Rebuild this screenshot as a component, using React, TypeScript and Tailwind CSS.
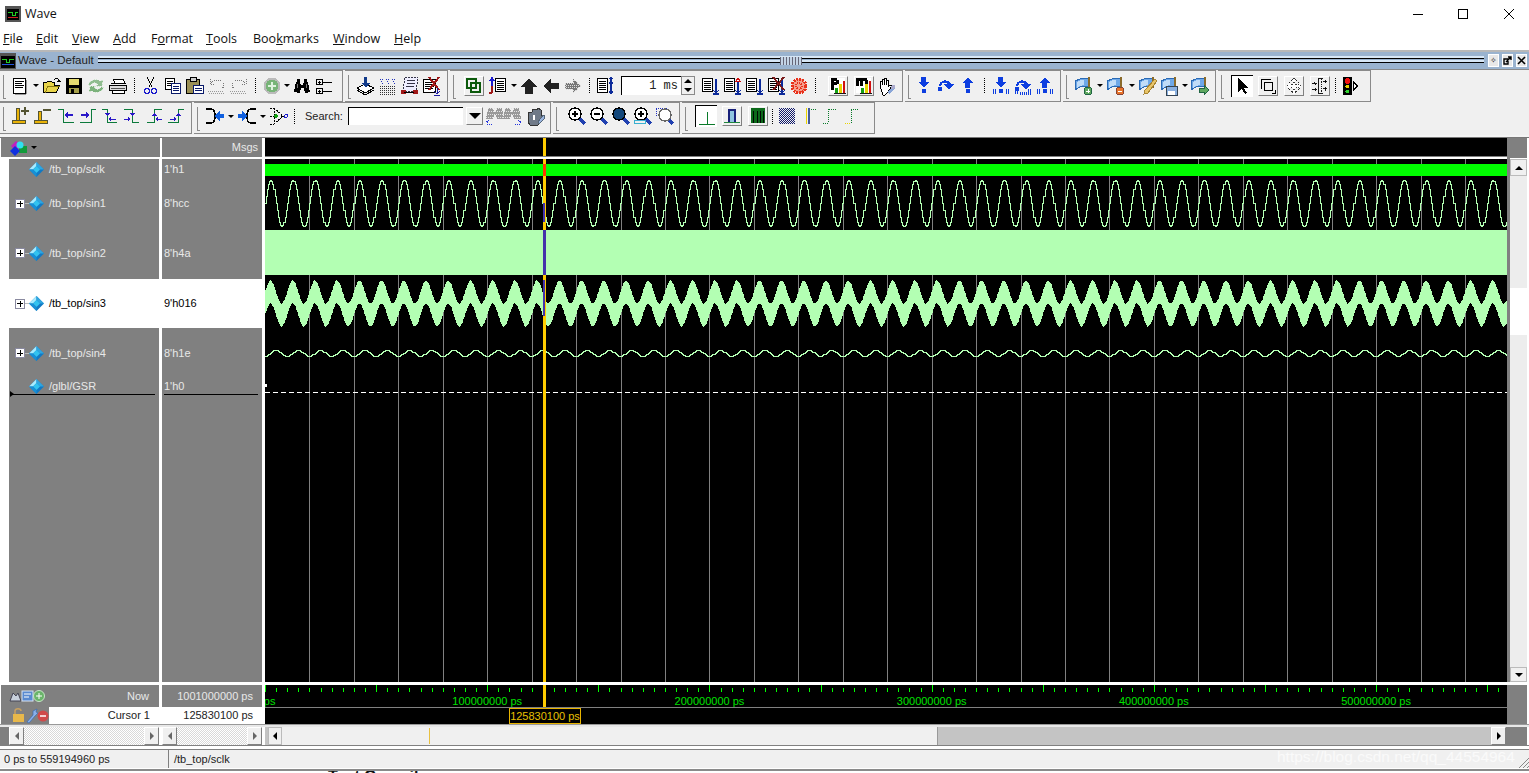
import type { ReactNode } from 'react';

const sans = 'font-["Liberation_Sans",sans-serif]';

const Ic = ({ children }: { children: ReactNode }) => (
  <svg width="20" height="20" viewBox="0 0 20 20" fill="none" shapeRendering="crispEdges">
    {children}
  </svg>
);

// toolbar helpers
const Cell = ({ children, raised }: { children?: ReactNode; raised?: boolean }) => (
  <div className="w-[22px] h-[22px] flex items-center justify-center shrink-0">
    {raised ? (
      <div className="w-[20px] h-[20px] flex items-center justify-center border border-t-white border-l-white border-r-[#808080] border-b-[#808080]">
        {children}
      </div>
    ) : (
      children
    )}
  </div>
);

const Drop = ({ w = 'w-[10px]' }: { w?: string }) => (
  <div className={`${w} h-[22px] flex items-center justify-center shrink-0`}>
    <div className="w-0 h-0 border-x-[3px] border-x-transparent border-t-[3px] border-t-black" />
  </div>
);

const Sep = () => (
  <div className="w-[11px] h-[22px] flex justify-center items-center shrink-0">
    <div className="h-[15px] border-l border-dotted border-black" />
  </div>
);

const Group = ({ w, pl, low, children }: { w: string; pl: string; low?: boolean; children: ReactNode }) => (
  <div className={`${w} ${pl} ${low ? 'pb-[4px]' : 'pb-[1px]'} h-[32px] relative flex items-center shrink-0 border-t border-r border-b border-[#8a8a8a] border-l-0`}>
    <div className="absolute left-[3px] top-[4px] h-[24px] w-[3px] border-l border-b border-[#8a8a8a]" />
    {children}
  </div>
);

const DocLines = ({ x = 4, y = 3, w = 10, h = 13 }: { x?: number; y?: number; w?: number; h?: number }) => (
  <>
    <rect x={x + 0.5} y={y + 0.5} width={w} height={h} fill="#fff" stroke="#000" />
    <path d={`M${x + 2} ${y + 3.5}h${w - 3}M${x + 2} ${y + 5.5}h${w - 5}M${x + 2} ${y + 7.5}h${w - 3}M${x + 2} ${y + 9.5}h${w - 4}`} stroke="#000" />
  </>
);

const NewDoc = () => <Ic><DocLines x={3} y={2} w={12} h={15} /><path d="M16 4v14M5 18h11" stroke="#999" /></Ic>;
const Open = () => (
  <Ic>
    <path d="M1.5 16.5v-10h3l1 -1h4l1 1h2v3h5l-3 7z" fill="#e8d44a" stroke="#000" />
    <path d="M3 17l3-7h12" stroke="#8a7a10" />
    <path d="M12 4c2-2 4-2 5 0" stroke="#000" />
    <path d="M15 6h4l-2-3z" fill="#000" />
  </Ic>
);
const Save = () => (
  <Ic>
    <rect x="2" y="2" width="16" height="16" fill="#000" />
    <rect x="5" y="3" width="10" height="6" fill="#e6dc70" />
    <rect x="5" y="12" width="10" height="5" fill="#a6a04a" />
    <rect x="7" y="13" width="3" height="4" fill="#000" />
  </Ic>
);
const Reload = () => (
  <Ic>
    <path d="M2 9c1-5 8-7 12-4l3-1-1 6h-6l2-2c-3-2-6-1-7 1z" fill="#8fbc8f" stroke="#cfe4cf" strokeDasharray="1 1" />
    <path d="M18 11c-1 5-8 7-12 4l-3 1 1-6h6l-2 2c3 2 6 1 7-1z" fill="#7cb27c" stroke="#cfe4cf" strokeDasharray="1 1" />
  </Ic>
);
const Printer = () => (
  <Ic>
    <path d="M5 3h10l2 4H7z" fill="#fff" stroke="#000" />
    <path d="M1.5 9.5h17v5h-17z" fill="#ddd" stroke="#000" />
    <path d="M4 14.5h12v3H4z" fill="#fff" stroke="#000" />
    <path d="M3 8l3-1h12" stroke="#000" />
    <path d="M3 12h14" stroke="#555" />
  </Ic>
);
const Cut = () => (
  <Ic>
    <path d="M6 1l5 10M13 1L8 11" stroke="#000" />
    <circle cx="6" cy="15" r="2.5" stroke="#1a1acc" strokeWidth="1.5" />
    <circle cx="13" cy="15" r="2.5" stroke="#1a1acc" strokeWidth="1.5" />
    <path d="M7 12l1 1M12 12l-1 1" stroke="#1a1acc" />
  </Ic>
);
const Copy = () => (
  <Ic>
    <rect x="2.5" y="2.5" width="9" height="11" fill="#fff" stroke="#000" />
    <path d="M4 5h6M4 7h6M4 9h6" stroke="#000" />
    <rect x="8.5" y="7.5" width="9" height="10" fill="#fff" stroke="#0a1a6a" />
    <path d="M10 10h6M10 12h6M10 14h6" stroke="#0a1a6a" />
  </Ic>
);
const Paste = () => (
  <Ic>
    <rect x="1.5" y="3.5" width="13" height="14" fill="#9a8f55" stroke="#000" />
    <rect x="5" y="1.5" width="6" height="4" fill="#ccc" stroke="#000" />
    <rect x="8.5" y="9.5" width="10" height="8" fill="#fff" stroke="#0a1a6a" />
    <path d="M10 12h7M10 14h7" stroke="#0a1a6a" />
  </Ic>
);
const Undo = () => (
  <Ic>
    <path d="M1 15h16M2 17h16" stroke="#999" strokeDasharray="1 1" />
    <path d="M4 7c3-4 9-4 12 0 1 3 0 5-1 6M3 3v5h5" stroke="#777" strokeDasharray="1 1" />
  </Ic>
);
const Redo = () => (
  <Ic>
    <path d="M1 15h16M2 17h16" stroke="#999" strokeDasharray="1 1" />
    <path d="M16 7c-3-4-9-4-12 0-1 3 0 5 1 6M17 3v5h-5" stroke="#777" strokeDasharray="1 1" />
  </Ic>
);
const AddCircle = () => (
  <Ic>
    <circle cx="10" cy="10" r="7.5" fill="#78b478" stroke="#bbb" strokeWidth="2" />
    <path d="M6 10h8M10 6v8" stroke="#dff2df" strokeWidth="2" />
  </Ic>
);
const Bino = () => (
  <Ic>
    <path d="M2 16l2-10h4l1 3h2l1-3h4l2 10-5 1-1-5H9l-1 5z" fill="#000" />
    <path d="M5 3h3v3H5zM12 3h3v3h-3z" fill="#000" />
    <path d="M5 8v4M14 8v4" stroke="#777" />
  </Ic>
);
const Tree2 = () => (
  <Ic>
    <rect x="2.5" y="3.5" width="6" height="5" stroke="#000" />
    <rect x="2.5" y="12.5" width="6" height="5" stroke="#000" />
    <path d="M4 6h3M5.5 4.5v3M4 15h3M5.5 13.5v3M9 6h9M9 15h9" stroke="#000" />
  </Ic>
);
const StackDown = () => (
  <Ic>
    <path d="M1 12l8-4 9 4-9 5z" fill="#fff" stroke="#000" />
    <path d="M1 14l8 5 9-5" stroke="#000" />
    <path d="M8 1h3v6h3l-4 5-4-5h2z" fill="#123a8a" />
  </Ic>
);
const DotsGrid = () => (
  <Ic>
    <path d="M2 10h16M2 12h16M2 14h16M2 16h16M2 18h16" stroke="#333" strokeDasharray="1 1" />
    <path d="M2 3h4M8 3h4M14 3h4M3 5h2M9 5h2M15 5h2M4 7h1M10 7h1M16 7h1" stroke="#2233bb" strokeDasharray="1 1" />
  </Ic>
);
const Scroll = () => (
  <Ic>
    <path d="M5 1h13l-2 14H3z" fill="#eef" stroke="#334" strokeDasharray="2 1" />
    <path d="M7 4h8M7 7h8M6 10h8" stroke="#334" />
    <circle cx="3.5" cy="16" r="2.5" fill="#a01818" />
    <circle cx="15.5" cy="16" r="2.5" fill="#a01818" />
    <path d="M4 16h10" stroke="#000" />
  </Ic>
);
const DocX = () => (
  <Ic>
    <DocLines x={1} y={3} w={12} h={13} />
    <path d="M7 1l10 13M17 1L7 14" stroke="#a01818" strokeWidth="2" />
    <path d="M15 12v6M12 15l3 3 3-3M12 19h6" stroke="#1a1aa0" />
  </Ic>
);
const Links = () => (
  <Ic>
    <rect x="2" y="2" width="10" height="10" stroke="#0c5a0c" strokeWidth="2" />
    <rect x="7" y="7" width="10" height="10" stroke="#0c5a0c" strokeWidth="2" />
  </Ic>
);
const ListArrow = () => (
  <Ic>
    <rect x="7.5" y="2.5" width="10" height="13" fill="#fff" stroke="#000" />
    <path d="M9 5h7M9 7h7M9 9h7M9 11h7M9 13h7" stroke="#000" />
    <path d="M4 10V3M2 5l2-3 2 3" stroke="#1c1cd0" strokeWidth="1.5" />
    <path d="M4 10v7M1 17h3" stroke="#a01818" strokeWidth="2" />
  </Ic>
);
const Arrow = ({ dir, dither }: { dir: 'u' | 'l' | 'r'; dither?: boolean }) => {
  const d = dir === 'u' ? 'M10 2l8 9h-4v7H6v-7H2z' : dir === 'l' ? 'M2 10l8-7v4h8v6h-8v4z' : 'M18 10l-8-7v4H2v6h8v4z';
  return (
    <Ic>
      {dither ? (
        <>
          <path d={d} fill="#777" />
          <path d={d} stroke="#ddd" strokeDasharray="1 1" />
          <path d="M3 9h14M3 11h14" stroke="#ddd" strokeDasharray="1 1" />
        </>
      ) : (
        <path d={d} fill="#222" />
      )}
    </Ic>
  );
};
const ListUpDown = () => (
  <Ic>
    <rect x="1.5" y="2.5" width="10" height="14" fill="#fff" stroke="#000" />
    <path d="M3 5h7M3 7h7M3 9h7M3 11h7M3 13h7" stroke="#000" />
    <path d="M15 1v17M13 3l2-2 2 2M13 7h4M13 16h4" stroke="#0c2a9a" strokeWidth="1.2" />
  </Ic>
);
const ListDown = ({ tip, x }: { tip?: string; x?: boolean }) => (
  <Ic>
    <rect x="1.5" y="2.5" width="10" height="13" fill="#fff" stroke="#000" />
    <path d="M3 5h7M3 7h7M3 9h7M3 11h7M3 13h7" stroke="#000" />
    <path d="M15 3v14M12 14l3 3 3-3M12 18h6" stroke="#0c2a9a" strokeWidth="1.2" />
    {tip && <path d="M13 5l2-3 2 3z" fill="#fff" stroke={tip} />}
    {x && <path d="M6 1l11 13M17 1L6 14" stroke="#7a1a1a" strokeWidth="2" />}
  </Ic>
);
const RedGear = () => (
  <Ic>
    <circle cx="10" cy="10" r="7" fill="#f4a090" stroke="#e8301a" strokeWidth="3" strokeDasharray="2 1" />
    <circle cx="10" cy="10" r="3" stroke="#e8301a" strokeWidth="2" strokeDasharray="1 1" />
  </Ic>
);
const Bars = ({ letter }: { letter: 'P' | 'M' }) => (
  <Ic>
    <rect x="1" y="1" width="17" height="17" fill="#fff" />
    <path d={letter === 'P' ? 'M2 1h7v2h2v5H9v1H5v5H2zM5 4v2h3V4z' : 'M1 1h12v2h1v7h-3V4H9v6H6V4H4v6H1z'} fill="#000" fillRule="evenodd" />
    <rect x="7" y="12" width="3" height="6" fill="#15a015" />
    <rect x="11" y="8" width="3" height="10" fill="#e8d400" />
    <rect x="15" y="4" width="3" height="14" fill="#d01010" />
    <path d="M6 18h13" stroke="#000" />
  </Ic>
);
const Hand = () => (
  <Ic>
    <path d="M4 10V5h2v4-6h2v6-7h2v7-5h2v7l2-2 2 1-4 6-3 3H7z" fill="#fff" stroke="#000" />
    <path d="M11 16l6-5 2 1-6 6z" fill="#8aa6d8" />
    <circle cx="17" cy="11" r="2" fill="#aac" />
  </Ic>
);
const Step = ({ kind, bars }: { kind: 'd' | 'o' | 'u'; bars?: boolean }) => (
  <Ic>
    {kind === 'd' && <path d="M7 1h5v5h3l-5 6-5-6h2z" fill="#0d3ee0" />}
    {kind === 'u' && <path d="M10 1l5 6h-3v5H7V7H5z" fill="#0d3ee0" />}
    {kind === 'o' && (
      <>
        <path d="M3 10c0-6 9-8 12-2h3l-5 6-5-6h4c-3-3-7-1-7 2z" fill="#0d3ee0" />
        <circle cx="4" cy="13" r="2.5" fill="#0d3ee0" />
      </>
    )}
    {kind !== 'o' && <circle cx="10" cy="15" r="2.5" fill="#0d3ee0" />}
    {bars && <path d="M2 13v5M4 13v5M15 13v5M17 13v5" stroke="#0d3ee0" strokeWidth="1" />}
    {bars && kind === 'o' && <path d="M7 17h1M9 17h1M11 17h1M13 17h1M15 17h1M17 17h1" stroke="#0d3ee0" strokeWidth="3" />}
  </Ic>
);
const Flag = ({ badge }: { badge: 'add' | 'rem' | 'edit' | 'save' | 'go' }) => (
  <Ic>
    <path d="M1 5l5-2 9-1v8l-9 1-5 3z" fill="#6ea8e8" stroke="#2a6ab5" />
    <path d="M3 6l4-2 3 0v5l-4 1-3 2z" fill="#c0dcf8" />
    <path d="M15 1v11" stroke="#8a6a2a" strokeWidth="2" />
    {badge === 'add' && <><circle cx="14" cy="15" r="4" fill="#5fa85f" stroke="#264" /><path d="M12 15h4M14 13v4" stroke="#fff" /></>}
    {badge === 'rem' && <><circle cx="14" cy="15" r="4" fill="#e8742a" stroke="#843" /><path d="M12 15h4" stroke="#fff" /></>}
    {badge === 'edit' && <path d="M17 3l2 2-9 12-4 1 1-4z" fill="#e8c468" stroke="#a88432" />}
    {badge === 'save' && <><rect x="6" y="10" width="11" height="9" fill="#8ab0e0" stroke="#345" /><rect x="8" y="15" width="7" height="4" fill="#fff" /></>}
    {badge === 'go' && <path d="M9 12h5V9l5 5-5 5v-3H9z" fill="#5fa85f" stroke="#264" />}
  </Ic>
);
const Pointer = () => (
  <Ic><path d="M5 2v14l4-3 3 5 2-1-3-5h5z" fill="#000" /></Ic>
);
const ZoomRect = () => (
  <Ic>
    <path d="M3 13V3h10" stroke="#000" strokeWidth="1.5" />
    <rect x="6" y="6" width="9" height="9" stroke="#000" strokeWidth="2" />
    <path d="M14 18h4v-4" stroke="#000" strokeWidth="1.5" />
  </Ic>
);
const Move = () => (
  <Ic>
    <path d="M10 1l3 3h-2v4h4V6l3 4-3 4v-2h-4v4h2l-3 3-3-3h2v-4H5v2l-3-4 3-4v2h4V4H7z" stroke="#222" strokeDasharray="1 1" fill="#fff" />
  </Ic>
);
const WaveList = () => (
  <Ic>
    <path d="M8 2v16M8 2h5M13 18H8" stroke="#000" />
    <path d="M1 7h5M4 5l2 2-2 2M1 14h5M4 12l2 2-2 2M13 5h5M16 3v4M13 13h5M16 11v4" stroke="#000" />
    <path d="M12 2v16" stroke="#000" strokeDasharray="1 1" />
  </Ic>
);
const Traffic = () => (
  <Ic>
    <rect x="3" y="1" width="9" height="18" fill="#000" />
    <circle cx="7.5" cy="5" r="3" fill="#f01010" />
    <circle cx="7.5" cy="10.5" r="2" fill="#e8d400" />
    <circle cx="7.5" cy="15.5" r="2" fill="#30d030" />
    <path d="M13.5 6v8l4-4z" fill="#fff" stroke="#000" />
  </Ic>
);
const AddCursor = ({ plus }: { plus: boolean }) => (
  <Ic>
    <path d={plus ? 'M5.5 2.5h3v12h-3z' : 'M5.5 5.5h3v9h-3z'} fill="#eab308" stroke="#553" />
    <path d="M1.5 14.5h13v3h-13z" fill="#eab308" stroke="#553" />
    {plus ? <path d="M10 5h8M14 1v8" stroke="#553" strokeWidth="2" /> : <path d="M10 4h8" stroke="#553" strokeWidth="2" />}
  </Ic>
);
const Edge = ({ d, tri, arrow }: { d: string; tri?: string; arrow: string }) => (
  <Ic>
    <path d={d} stroke="#0c7a3c" />
    {tri && <path d={tri} fill="#2a18c8" />}
    <path d={arrow} fill="#2a18c8" />
  </Ic>
);
const MergeL = ({ c, b }: { c: string; b: boolean }) => (
  <Ic>
    {b ? (
      <path d="M1 3h5c4 0 4 5 4 7 0 2 0 7-4 7H1" stroke="#000" strokeWidth="1.5" />
    ) : (
      <path d="M19 3h-5c-4 0-4 5-4 7 0 2 0 7 4 7h5" stroke="#000" strokeWidth="1.5" />
    )}
    <path d={b ? 'M9 10l6-5v3h4v4h-4v3z' : 'M11 10l-6-5v3H1v4h4v3z'} fill={c} />
  </Ic>
);
const GateGreen = () => (
  <Ic>
    <path d="M2 2h4M2 10h4M2 18h4M6 2v16M6 2l7 6v4l-7 6" stroke="#000" strokeDasharray="2 1" />
    <path d="M6 10h4M8 8v4" stroke="#10a010" strokeWidth="2" />
    <path d="M13 10h4" stroke="#000" />
    <circle cx="18" cy="10" r="1.5" stroke="#1a1acc" />
  </Ic>
);
const FindBoth = ({ flip }: { flip?: boolean }) => (
  <Ic>
    <path d="M3 2h5l1 4h2l1-4h5l2 11h-7l-1-4H9l-1 4H1z" fill="#999" />
    <path d="M3 2h14M2 5h16M1 8h18M1 11h18" stroke="#e4e4e4" strokeDasharray="1 1" />
    <path d={flip ? 'M13 18h5v-3M16 14l3 2' : 'M7 18H2v-3M4 14l-3 2'} stroke="#2233dd" strokeDasharray="1 1" />
  </Ic>
);
const Config = () => (
  <Ic>
    <path d="M2 6h4l1-3 4 1 1-2 3 2v8l-3 7H4l-2-3z" fill="#707a88" stroke="#333" />
    <path d="M8 9v5" stroke="#fff" strokeWidth="2" />
    <path d="M12 16l5-7 2 1-1 3-5 5z" fill="#9ab4de" stroke="#567" />
  </Ic>
);
const Mag = ({ k }: { k: 'in' | 'out' | 'full' | 'sel' | 'dash' }) => (
  <Ic>
    <path d="M12 12l6 6" stroke="#2040b0" strokeWidth="3" />
    {k === 'dash' ? (
      <>
        <path d="M1 2h10v7H1z" stroke="#2030c0" strokeDasharray="1 1" />
        <circle cx="10" cy="9" r="6" fill="#fff" stroke="#666" strokeWidth="1.5" />
      </>
    ) : (
      <circle cx="8" cy="8" r="6" fill={k === 'full' ? '#12467a' : '#fff'} stroke="#000" strokeWidth="1.5" />
    )}
    {(k === 'in' || k === 'sel') && <path d="M5 8h6M8 5v6" stroke="#000" strokeWidth="1.5" />}
    {k === 'out' && <path d="M5 8h6" stroke="#000" strokeWidth="1.5" />}
    {k === 'sel' && <rect x="1.5" y="14.5" width="11" height="3" stroke="#3ab0d0" />}
  </Ic>
);
const Pulse = ({ k }: { k: 0 | 1 | 2 }) => (
  <Ic>
    {k === 0 && <path d="M2 17h16M10 17V5" stroke="#0a7a2a" />}
    {k === 1 && (
      <>
        <rect x="6" y="2" width="8" height="15" fill="#18207a" />
        <rect x="8" y="4" width="4" height="13" fill="#8fc4e0" />
        <path d="M1 17.5h18" stroke="#0a7a2a" />
      </>
    )}
    {k === 2 && (
      <>
        <rect x="2" y="1" width="16" height="17" fill="#0c6a1a" />
        <path d="M5 4v14M9 4v14M13 4v14M16 4v14" stroke="#000" />
      </>
    )}
  </Ic>
);
const Hatch = () => (
  <svg width="20" height="20" viewBox="0 0 20 20" shapeRendering="crispEdges">
    <defs>
      <pattern id="hatchp" width="2" height="2" patternUnits="userSpaceOnUse">
        <rect width="1" height="1" fill="#111a6a" />
        <rect x="1" y="1" width="1" height="1" fill="#111a6a" />
      </pattern>
    </defs>
    <rect x="2" y="2" width="16" height="16" fill="url(#hatchp)" />
  </svg>
);
const DotStep = ({ k }: { k: 0 | 1 | 2 }) => (
  <Ic>
    {k === 0 && <path d="M12 3h5" stroke="#0a7a2a" strokeDasharray="1 1" />}
    {k === 0 && <path d="M7 2v16" stroke="#e8d400" />}
    {k === 0 && <path d="M9 2h2v16H9z" fill="#445a9a" />}
    {k === 1 && <path d="M2 17h5v-14h8" stroke="#0a7a2a" strokeDasharray="1 1" />}
    {k === 2 && <path d="M8 17V3h8" stroke="#0a7a2a" strokeDasharray="1 1" />}
    {k === 2 && <path d="M2 17h6" stroke="#e8d400" strokeDasharray="1 1" />}
  </Ic>
);

const Diamond = () => (
  <svg width="15" height="15" viewBox="0 0 15 15" shapeRendering="geometricPrecision" className="shrink-0">
    <polygon points="7.5,0 15,7.5 7.5,15 0,7.5" fill="#1179c4" />
    <polygon points="7.5,0 0,7.5 4,7.5 7.5,4" fill="#a8ecff" />
    <polygon points="7.5,0 15,7.5 11,7.5 7.5,4" fill="#2fa6e0" />
    <polygon points="7.5,4 11,7.5 7.5,11 4,7.5" fill="#32c3f0" />
    <polygon points="0,7.5 7.5,15 7.5,11 4,7.5" fill="#1890d6" />
  </svg>
);

const PlusBox = () => (
  <div className="w-[10px] h-[10px] shrink-0 border border-[#8a8aa0] bg-white flex items-center justify-center relative">
    <div className="w-[6px] h-px bg-black absolute" />
    <div className="w-px h-[6px] bg-black absolute" />
  </div>
);

const rows = [
  { name: '/tb_top/sclk', value: "1'h1", h: 'h-[19px] pt-[2px]', expand: false },
  { name: '/tb_top/sin1', value: "8'hcc", h: 'h-[51px]', expand: true },
  { name: '/tb_top/sin2', value: "8'h4a", h: 'h-[50px] pb-[2px]', expand: true },
  { name: '/tb_top/sin3', value: "9'h016", h: 'h-[49px]', expand: true, sel: true },
  { name: '/tb_top/sin4', value: "8'h1e", h: 'h-[50px]', expand: true },
  { name: '/glbl/GSR', value: "1'h0", h: 'h-[18px] pb-[2px]', expand: false, last: true },
];

const W = 1242;
const PER = 22.222;
const top = 138;

const stepped = (cy: number, amp: number, phase: number) => {
  let d = '';
  const n = Math.ceil(W / (PER / 20));
  for (let i = 0; i <= n; i++) {
    const x = i * (PER / 20);
    const y = Math.round(cy - amp * Math.sin(2 * Math.PI * (x / PER - phase))) - top + 0.5;
    d += `${i === 0 ? 'M' : 'L'}${x.toFixed(1)} ${y}L${(x + PER / 20).toFixed(1)} ${y}`;
  }
  return d;
};

const bandPath = () => {
  const up: string[] = [];
  const low: string[] = [];
  for (let x = 0; x <= W; x++) {
    const c = 303.5 - 11.5 * Math.sin((2 * Math.PI * x) / PER) - top;
    const j = x % 2 === 0 ? 0.8 : -0.8;
    up.push(`${x} ${Math.round(c - 11.5 + j)}`);
    low.unshift(`${x} ${Math.round(c + 11.5 + j)}`);
  }
  return `M${up.join('L')}L${low.join('L')}Z`;
};

const WaveCanvas = () => {
  const grid = Array.from({ length: 27 }, (_, i) => (i + 1) * 44.444);
  return (
    <svg width={W} height={544} className="block shrink-0 bg-black" shapeRendering="crispEdges">
      <rect x="0" y="18" width={W} height="1" fill="#808080" />
      <rect x="0" y="19" width={W} height="2" fill="#fff" />
      {grid.map((x) => (
        <rect key={x} x={Math.round(x)} y="21" width="1" height="523" fill="#808080" />
      ))}
      <rect x="0" y="26" width={W} height="12" fill="#00ff00" />
      <path d={stepped(203, 23, 0)} stroke="#b3ffb3" fill="none" />
      <rect x="0" y="92" width={W} height="45" fill="#b3ffb3" />
      <path d={bandPath()} fill="#b3ffb3" />
      <path d={stepped(353, 3, 0.23)} stroke="#b3ffb3" fill="none" />
      <path d="M0 254.5H1242" stroke="#fff" strokeDasharray="5 3" />
      <rect x="0" y="246" width="2" height="3" fill="#fff" />
      {/* cursor */}
      <rect x="278" y="0" width="3" height="18" fill="#ffcc00" />
      <rect x="278" y="21" width="3" height="523" fill="#ffcc00" />
      <rect x="278" y="26" width="3" height="12" fill="#ff3300" />
      <rect x="278" y="65" width="2" height="19" fill="#4433aa" />
      <rect x="278" y="92" width="3" height="45" fill="#4433aa" />
      <rect x="278" y="142" width="2" height="36" fill="#4433aa" />
    </svg>
  );
};

const Ruler = () => {
  const ticks = Array.from({ length: 112 }, (_, i) => i);
  const labels = [100, 200, 300, 400, 500];
  return (
    <svg width={W} height={39} className="block shrink-0 bg-black" shapeRendering="crispEdges">
      {ticks.map((i) => (
        <rect
          key={i}
          x={Math.round(i * 11.111)}
          y={i % 10 === 0 ? 0 : 3}
          width="1"
          height={i % 10 === 0 ? 7 : 4}
          fill="#00ff00"
        />
      ))}
      <g fontFamily="Liberation Sans" fontSize="11" fill="#00e000" shapeRendering="auto">
        <text x="0" y="20" textAnchor="middle">0 ps</text>
        {labels.map((l) => (
          <text key={l} x={l * 2.2222} y="20" textAnchor="middle">{`${l}000000 ps`}</text>
        ))}
      </g>
      <rect x="0" y="22" width={W} height="1" fill="#808080" />
      <rect x="278" y="0" width="3" height="22" fill="#ffcc00" />
      <rect x="244.5" y="23.5" width="71" height="15" fill="#000" stroke="#e8b400" />
      <text x="280" y="35" textAnchor="middle" fontFamily="Liberation Sans" fontSize="11" fill="#e8c000">125830100 ps</text>
    </svg>
  );
};

const SbBtn = ({ dir, w = 'w-[15px]' }: { dir: 'l' | 'r'; w?: string }) => (
  <div className={`${w} h-[18px] shrink-0 bg-[#f0f0f0] border border-t-white border-l-white border-r-[#808080] border-b-[#808080] flex items-center justify-center`}>
    <div
      className={
        dir === 'l'
          ? 'w-0 h-0 border-y-[4px] border-y-transparent border-r-[4px] border-r-[#666]'
          : 'w-0 h-0 border-y-[4px] border-y-transparent border-l-[4px] border-l-[#666]'
      }
    />
  </div>
);

const Dither = () => (
  <div className="flex-1 h-[18px] bg-[repeating-conic-gradient(#d8d8d8_0_25%,#fff_0_50%)] bg-[length:2px_2px]" />
);

export default function App() {
  return (
    <div className={`w-[1529px] h-[773px] overflow-hidden bg-white relative flex flex-col ${sans} text-[11px]`}>
      {/* window title */}
      <div className="h-[28px] flex items-center pl-[5px] shrink-0">
        <svg width="16" height="16" viewBox="0 0 16 16" shapeRendering="crispEdges">
          <rect width="16" height="16" fill="#555" />
          <rect x="2" y="3" width="12" height="11" fill="#000" />
          <path d="M3 6h4v3h3V6h3" stroke="#22cc22" fill="none" />
          <path d="M3 11h10" stroke="#cc2222" />
        </svg>
        <span className='ml-[4px] text-[12.5px] text-[#111] font-["Open_Sans",sans-serif]'>Wave</span>
        <div className="ml-auto flex items-center">
          <svg width="12" height="12" viewBox="0 0 12 12" className="mr-[33px]" shapeRendering="crispEdges"><path d="M1 6.5h10" stroke="#000" /></svg>
          <svg width="12" height="12" viewBox="0 0 12 12" className="mr-[34px]" shapeRendering="crispEdges"><rect x="1.5" y="1.5" width="9" height="9" fill="none" stroke="#000" /></svg>
          <svg width="12" height="12" viewBox="0 0 12 12" className="mr-[14px]"><path d="M1 1l10 10M11 1L1 11" stroke="#000" fill="none" /></svg>
        </div>
      </div>
      {/* menu */}
      <div className='h-[22px] relative flex items-center shrink-0 text-[12.5px] text-[#111] font-["Open_Sans",sans-serif] pl-[3px]'>
        <span className="w-[33px]"><u>F</u>ile</span>
        <span className="w-[36px]"><u>E</u>dit</span>
        <span className="w-[41px]"><u>V</u>iew</span>
        <span className="w-[38px]"><u>A</u>dd</span>
        <span className="w-[55px]">F<u>o</u>rmat</span>
        <span className="w-[47px]"><u>T</u>ools</span>
        <span className="w-[80px]">Boo<u>k</u>marks</span>
        <span className="w-[61px]"><u>W</u>indow</span>
        <span><u>H</u>elp</span>
      </div>
      {/* dock title */}
      <div className="h-[20px] shrink-0 border-t-2 border-t-[#b8b8b8] border-b border-b-[#8a8a8a] bg-[#9ab3cf] flex items-center text-[11.5px] relative">
        <svg width="16" height="16" viewBox="0 0 16 16" className="shrink-0" shapeRendering="crispEdges">
          <rect width="16" height="16" fill="#555" />
          <rect x="1" y="3" width="14" height="12" fill="#000" />
          <path d="M2 6h4v3h3V6h5" stroke="#22cc22" fill="none" />
          <path d="M2 11h12" stroke="#2255dd" />
        </svg>
        <span className="ml-[2px] w-[80px] text-[#222] whitespace-nowrap">Wave - Default</span>
        <div className="w-[1386px] h-[7px] self-start mt-[4px] flex flex-col">
          <div className="h-[2px] bg-[#d7e6f5]" />
          <div className="h-px bg-black" />
          <div className="h-px" />
          <div className="h-[2px] bg-[#d7e6f5]" />
          <div className="h-px bg-black" />
        </div>
        <div className="absolute left-[780px] top-[5px] w-[22px] h-[8px] bg-[#9ab3cf] bg-[repeating-linear-gradient(90deg,#667_0_1px,#c4d4e6_1px_3px)]" />
        <div className="ml-[4px] w-[11px] h-[13px] bg-[#e8e8e8] border border-white flex items-center justify-center text-[8px] leading-none text-black">✧</div>
        <div className="ml-[3px] w-[11px] h-[13px] bg-[#e8e8e8] border border-white flex items-center justify-center">
          <svg width="9" height="9" viewBox="0 0 9 9"><path d="M1 3h4v5H1zM3 6l5-5M5 1h3v3" stroke="#000" fill="none" strokeWidth="1.4" /></svg>
        </div>
        <div className="ml-[3px] w-[11px] h-[13px] bg-[#e8e8e8] border border-white flex items-center justify-center">
          <svg width="9" height="9" viewBox="0 0 9 9"><path d="M1 1l7 7M8 1L1 8" stroke="#000" fill="none" strokeWidth="1.6" /></svg>
        </div>
      </div>
      {/* toolbar rows */}
      <div className="shrink-0 h-[65px] bg-[#f0f0f0] flex flex-col">
        <div className="h-[32px] flex gap-[2px]">
          <Group w="w-[343px]" pl="pl-[9px]">
            <Cell><NewDoc /></Cell><Drop />
            <Cell><Open /></Cell><Cell><Save /></Cell><Cell><Reload /></Cell><Cell><Printer /></Cell>
            <Sep />
            <Cell><Cut /></Cell><Cell><Copy /></Cell><Cell><Paste /></Cell><Cell><Undo /></Cell><Cell><Redo /></Cell>
            <Sep />
            <Cell><AddCircle /></Cell><Drop w="w-[8px]" />
            <Cell><Bino /></Cell><Cell><Tree2 /></Cell>
          </Group>
          <Group w="w-[103px]" pl="pl-[10px]">
            <Cell><StackDown /></Cell><Cell><DotsGrid /></Cell><Cell><Scroll /></Cell><Cell><DocX /></Cell>
          </Group>
          <Group w="w-[453px]" pl="pl-[13px]">
            <Cell raised><Links /></Cell>
            <div className="w-[2px]" />
            <Cell><ListArrow /></Cell><Drop w="w-[9px]" />
            <Cell><Arrow dir="u" /></Cell><Cell><Arrow dir="l" /></Cell><Cell><Arrow dir="r" dither /></Cell>
            <Sep />
            <Cell><ListUpDown /></Cell>
            <div className='ml-[4px] w-[60px] h-[19px] bg-white border-t border-l border-black flex items-center justify-end pr-[3px] text-[12px] font-["Liberation_Mono",monospace] text-[#222]'>1 ms</div>
            <div className="w-[14px] h-[19px] flex flex-col border border-[#8a8a8a]">
              <div className="h-1/2 flex items-center justify-center"><div className="w-0 h-0 border-x-[4px] border-x-transparent border-b-[4px] border-b-black" /></div>
              <div className="h-1/2 flex items-center justify-center"><div className="w-0 h-0 border-x-[4px] border-x-transparent border-t-[4px] border-t-black" /></div>
            </div>
            <div className="w-[5px]" />
            <Cell><ListDown /></Cell><Cell><ListDown tip="#d01010" /></Cell><Cell><ListDown /></Cell><Cell><ListDown x /></Cell><Cell><RedGear /></Cell>
            <Sep />
            <div className="w-[6px]" />
            <Cell raised><Bars letter="P" /></Cell>
            <div className="w-[4px]" />
            <Cell raised><Bars letter="M" /></Cell><Cell><Hand /></Cell>
          </Group>
          <Group w="w-[156px]" pl="pl-[8px]">
            <Cell><Step kind="d" /></Cell><Cell><Step kind="o" /></Cell><Cell><Step kind="u" /></Cell>
            <Sep />
            <Cell><Step kind="d" bars /></Cell><Cell><Step kind="o" bars /></Cell><Cell><Step kind="u" bars /></Cell>
          </Group>
          <Group w="w-[153px]" pl="pl-[10px]">
            <Cell><Flag badge="add" /></Cell><Drop />
            <Cell><Flag badge="rem" /></Cell><Drop />
            <Cell><Flag badge="edit" /></Cell>
            <Cell><Flag badge="save" /></Cell><Drop w="w-[8px]" />
            <Cell><Flag badge="go" /></Cell>
          </Group>
          <Group w="w-[153px]" pl="pl-[13px]">
            <div className="w-[22px] h-[22px] bg-white border-t border-l border-black flex items-center justify-center"><Pointer /></div>
            <div className="w-[4px]" />
            <Cell raised><ZoomRect /></Cell>
            <div className="w-[4px]" />
            <Cell raised><Move /></Cell>
            <div className="w-[4px]" />
            <Cell raised><WaveList /></Cell>
            <div className="w-[8px] flex justify-center"><div className="h-[15px] border-l border-dotted border-black" /></div>
            <Cell><Traffic /></Cell>
          </Group>
        </div>
        <div className="h-[32px] flex gap-[2px]">
          <Group w="w-[192px]" pl="pl-[10px]" low>
            <Cell><AddCursor plus /></Cell><Cell><AddCursor plus={false} /></Cell>
            <Cell><Edge d="M3 3.5H8V16.5H19" arrow="M9 9l4-3v2h5v2h-5v2z" /></Cell>
            <Cell><Edge d="M3 16.5H14V3.5H19" arrow="M13 9L9 6v2H4v2h5v2z" /></Cell>
            <Cell><Edge d="M3 3.5H8V16.5H18" tri="M5 7h6l-3 3z" arrow="M9 13l3-2.5v2h5v1h-5v2z" /></Cell>
            <Cell><Edge d="M3 3.5H11V16.5H18" tri="M8 7h6l-3 3z" arrow="M10 13l-3-2.5v2H3v1h4v2z" /></Cell>
            <Cell><Edge d="M4 16.5H11V3.5H19" tri="M8 10h6l-3-3z" arrow="M12 13l3-2.5v2h4v1h-4v2z" /></Cell>
            <Cell><Edge d="M3 16.5H13V3.5H19" tri="M10 10h6l-3-3z" arrow="M12 13l-3-2.5v2H5v1h4v2z" /></Cell>
          </Group>
          <Group w="w-[357px]" pl="pl-[10px]" low>
            <Cell><MergeL c="#1060e0" b /></Cell><Drop w="w-[10px]" />
            <Cell><MergeL c="#1060e0" b={false} /></Cell><Drop w="w-[9px]" />
            <Cell><GateGreen /></Cell>
            <Sep />
            <span className="ml-[5px] w-[43px] text-[#222] text-[11px]">Search:</span>
            <div className="w-[115px] h-[18px] bg-white border-t border-l border-black" />
            <div className="ml-[3px] w-[17px] h-[18px] flex items-center justify-center border border-t-white border-l-white border-r-[#808080] border-b-[#808080]">
              <div className="w-0 h-0 border-x-[6px] border-x-transparent border-t-[6px] border-t-black" />
            </div>
            <div className="w-[1px]" />
            <Cell><FindBoth /></Cell>
            <div className="ml-[-5px]"><Cell><FindBoth flip /></Cell></div>
            <div className="w-[2px]" />
            <Cell><Config /></Cell>
          </Group>
          <Group w="w-[127px]" pl="pl-[13px]" low>
            <Cell><Mag k="in" /></Cell><Cell><Mag k="out" /></Cell><Cell><Mag k="full" /></Cell><Cell><Mag k="sel" /></Cell><Cell><Mag k="dash" /></Cell>
          </Group>
          <Group w="w-[193px]" pl="pl-[13px]" low>
            <div className="w-[22px] h-[22px] bg-white border-t border-l border-black flex items-center justify-center"><Pulse k={0} /></div>
            <div className="w-[4px]" />
            <Cell raised><Pulse k={1} /></Cell>
            <div className="w-[4px]" />
            <Cell raised><Pulse k={2} /></Cell>
            <div className="w-[7px] flex justify-center"><div className="h-[15px] border-l border-dotted border-black" /></div>
            <Cell><Hatch /></Cell><Cell><DotStep k={0} /></Cell><Cell><DotStep k={1} /></Cell><Cell><DotStep k={2} /></Cell>
          </Group>
        </div>
      </div>
      <div className="h-[3px] shrink-0 bg-[#f4f4f4] border-b border-[#777]" />
      {/* main panes */}
      <div className="flex h-[544px] shrink-0">
        <div className="w-[160px] shrink-0 flex flex-col bg-white">
          <div className="h-[19px] ml-[1px] bg-[#808080] flex items-center pl-[9px] shrink-0">
            <svg width="18" height="16" viewBox="0 0 18 16" className="shrink-0">
              <path d="M6 1l6 5-6 5-5-5z" fill="#c020c0" />
              <rect x="9" y="6" width="8" height="7" fill="#129a3a" />
              <path d="M5 6l5 5-5 5-5-5z" fill="#1030e0" />
              <circle cx="10" cy="5" r="3.5" fill="#30e0f0" />
            </svg>
            <div className="ml-[3px] w-0 h-0 border-x-[3px] border-x-transparent border-t-[3px] border-t-black" />
          </div>
          <div className="h-[2px] shrink-0" />
          {rows.map((r) => (
            <div
              key={r.name}
              className={`${r.h} shrink-0 ml-[9px] mr-[1px] flex items-center relative ${r.sel ? 'bg-white text-black' : 'bg-[#808080] text-[#e8e8e8]'}`}
            >
              {r.expand && <div className="absolute left-[6px]"><PlusBox /></div>}
              {r.expand && <div className="absolute left-[16px] w-[5px] h-px bg-[#bbb]" />}
              <div className="absolute left-[20px]"><Diamond /></div>
              <span className="absolute left-[40px]">{r.name}</span>
              {r.last && (
                <>
                  <div className="absolute left-[2px] right-[4px] bottom-[1px] h-px bg-black" />
                  <div className="absolute left-[1px] bottom-[-1px] w-0 h-0 border-y-[3px] border-y-transparent border-l-[4px] border-l-black" />
                </>
              )}
            </div>
          ))}
          <div className="flex-1 ml-[9px] mr-[1px] bg-[#808080]" />
        </div>
        <div className="w-[105px] shrink-0 flex flex-col bg-white pl-[2px]">
          <div className="h-[19px] w-[100px] bg-[#808080] text-[#e8e8e8] flex items-center justify-end pr-[4px] shrink-0">Msgs</div>
          <div className="h-[2px] shrink-0" />
          {rows.map((r) => (
            <div
              key={r.value}
              className={`${r.h} w-[100px] shrink-0 flex items-center pl-[2px] relative ${r.sel ? 'bg-white text-black' : 'bg-[#808080] text-[#e8e8e8]'}`}
            >
              {r.value}
              {r.last && <div className="absolute left-[2px] right-[4px] bottom-[1px] h-px bg-black" />}
            </div>
          ))}
          <div className="flex-1 w-[100px] bg-[#808080]" />
        </div>
        <WaveCanvas />
        <div className="flex-1 border-l-[3px] border-[#808080] flex flex-col pr-[2px] bg-white">
          <div className="h-[20px] bg-[#808080] shrink-0" />
          <div className="h-[17px] mt-[1px] bg-[#f0f0f0] border border-[#bbb] flex items-center justify-center shrink-0">
            <div className="w-0 h-0 border-x-[4px] border-x-transparent border-b-[4px] border-b-black" />
          </div>
          <div className="h-[112px] bg-[#ededed] shrink-0" />
          <div className="h-[47px] bg-white shrink-0" />
          <div className="flex-1 bg-[#ededed]" />
          <div className="h-[15px] bg-[#f0f0f0] border border-[#bbb] flex items-center justify-center shrink-0">
            <div className="w-0 h-0 border-x-[4px] border-x-transparent border-t-[4px] border-t-black" />
          </div>
        </div>
      </div>
      {/* bottom: now / cursor */}
      <div className="h-[3px] shrink-0 bg-white" />
      <div className="flex h-[39px] shrink-0">
        <div className="w-[160px] shrink-0 flex flex-col pl-[1px] pr-[1px]">
          <div className="h-[22px] bg-[#808080] flex items-center text-[#e8e8e8] relative">
            <svg width="36" height="14" viewBox="0 0 36 14" className="ml-[8px]">
              <path d="M1 12l3-8 3 3 2-3 3 8z" fill="#c8d0dc" stroke="#445" />
              <rect x="13" y="2" width="11" height="10" fill="#5a8ad0" stroke="#d8e4f4" />
              <path d="M15 5h7M15 8h5" stroke="#fff" />
              <circle cx="30" cy="7" r="5.5" fill="#6ab46a" stroke="#c8e4c8" />
              <path d="M27 7h6M30 4v6" stroke="#fff" />
            </svg>
            <span className="ml-auto mr-[10px]">Now</span>
          </div>
          <div className="h-[17px] flex bg-[#808080]">
            <svg width="38" height="17" viewBox="0 0 38 17" className="ml-[10px]">
              <rect x="2" y="7" width="11" height="8" fill="#e8b84a" />
              <path d="M4 7V4c0-3 6-3 6 0" stroke="#c8a060" fill="none" strokeWidth="1.5" />
              <path d="M16 15l6-7 0-4 4-2-1 3 2 1-3 3-6 7z" fill="#8ab0e8" stroke="#3a6ab0" strokeWidth="0.7" />
              <circle cx="32" cy="9" r="5.5" fill="#d04a4a" />
              <path d="M29 9h6" stroke="#fff" strokeWidth="1.5" />
            </svg>
            <div className="flex-1 bg-white flex items-center justify-end pr-[9px] text-[#222]">Cursor 1</div>
          </div>
        </div>
        <div className="w-[105px] shrink-0 pl-[2px] pr-[3px] flex flex-col">
          <div className="h-[22px] bg-[#808080] text-[#e8e8e8] flex items-center justify-end pr-[9px]">1001000000 ps</div>
          <div className="h-[17px] bg-white text-[#222] flex items-center justify-end pr-[9px]">125830100 ps</div>
        </div>
        <Ruler />
        <div className="flex-1 border-l-[3px] border-[#808080] pr-[2px]"><div className="h-full bg-[#808080]" /></div>
      </div>
      <div className="h-[3px] shrink-0 bg-[#e8e8e8] border-t border-[#999]" />
      {/* scrollers */}
      <div className="flex h-[18px] shrink-0">
        <div className="w-[160px] shrink-0 pl-[9px] pr-[1px] flex bg-[linear-gradient(90deg,#808080_9px,transparent_9px)]">
          <SbBtn dir="l" /><Dither /><SbBtn dir="r" />
        </div>
        <div className="w-[105px] shrink-0 pl-[2px] pr-[3px] flex">
          <SbBtn dir="l" /><Dither /><SbBtn dir="r" />
        </div>
        <div className="w-[1242px] shrink-0 flex bg-[#c4c4c4] pl-[3px] border-r border-[#808080]">
          <div className="w-[14px] h-[18px] bg-[#f0f0f0] border border-[#bbb] flex items-center justify-center">
            <div className="w-0 h-0 border-y-[4px] border-y-transparent border-r-[4px] border-r-black" />
          </div>
          <div className="w-[656px] bg-[#f0f0f0] border-r border-[#999] relative">
            <div className="absolute left-[147px] top-[1px] w-px h-[16px] bg-[#e8c040]" />
          </div>
          <div className="flex-1" />
          <div className="w-[15px] h-[18px] bg-[#f0f0f0] border border-t-white border-l-white border-r-[#808080] border-b-[#808080] flex items-center justify-center">
            <div className="w-0 h-0 border-y-[4px] border-y-transparent border-l-[4px] border-l-black" />
          </div>
        </div>
        <div className="flex-1 border-l-[3px] border-[#808080] pr-[2px]"><div className="h-full bg-[#808080]" /></div>
      </div>
      <div className="h-[5px] shrink-0 bg-white border-t border-b border-[#808080]" />
      {/* status */}
      <div className="h-[18px] shrink-0 bg-[#f0f0f0] flex items-center text-[#222] relative">
        <span className="w-[169px] pl-[4px] shrink-0 h-full flex items-center border-r border-[#808080]">0 ps to 559194960 ps</span>
        <span className="pl-[5px]">/tb_top/sclk</span>
        <svg width="10" height="10" viewBox="0 0 10 10" className="absolute right-0 bottom-0">
          <path d="M0 10l10-10M4 10l6-6M8 10l2-2" stroke="#888" fill="none" />
        </svg>
      </div>
      {/* whatever sits behind the window */}
      <div className="h-px shrink-0 bg-white" />
      <div className="h-[2px] shrink-0 bg-[#8a8a8a]" />
      <div className="flex-1 overflow-hidden bg-white relative">
        <span className="absolute left-[328px] top-[-2px] font-bold text-[16px] leading-none text-[#111] whitespace-nowrap">Text Compiler</span>
      </div>
      <div className="absolute left-[1277px] top-[745px] text-[15.5px] text-white/65 whitespace-nowrap">
        https://blog.csdn.net/qq_44554964
      </div>
    </div>
  );
}
